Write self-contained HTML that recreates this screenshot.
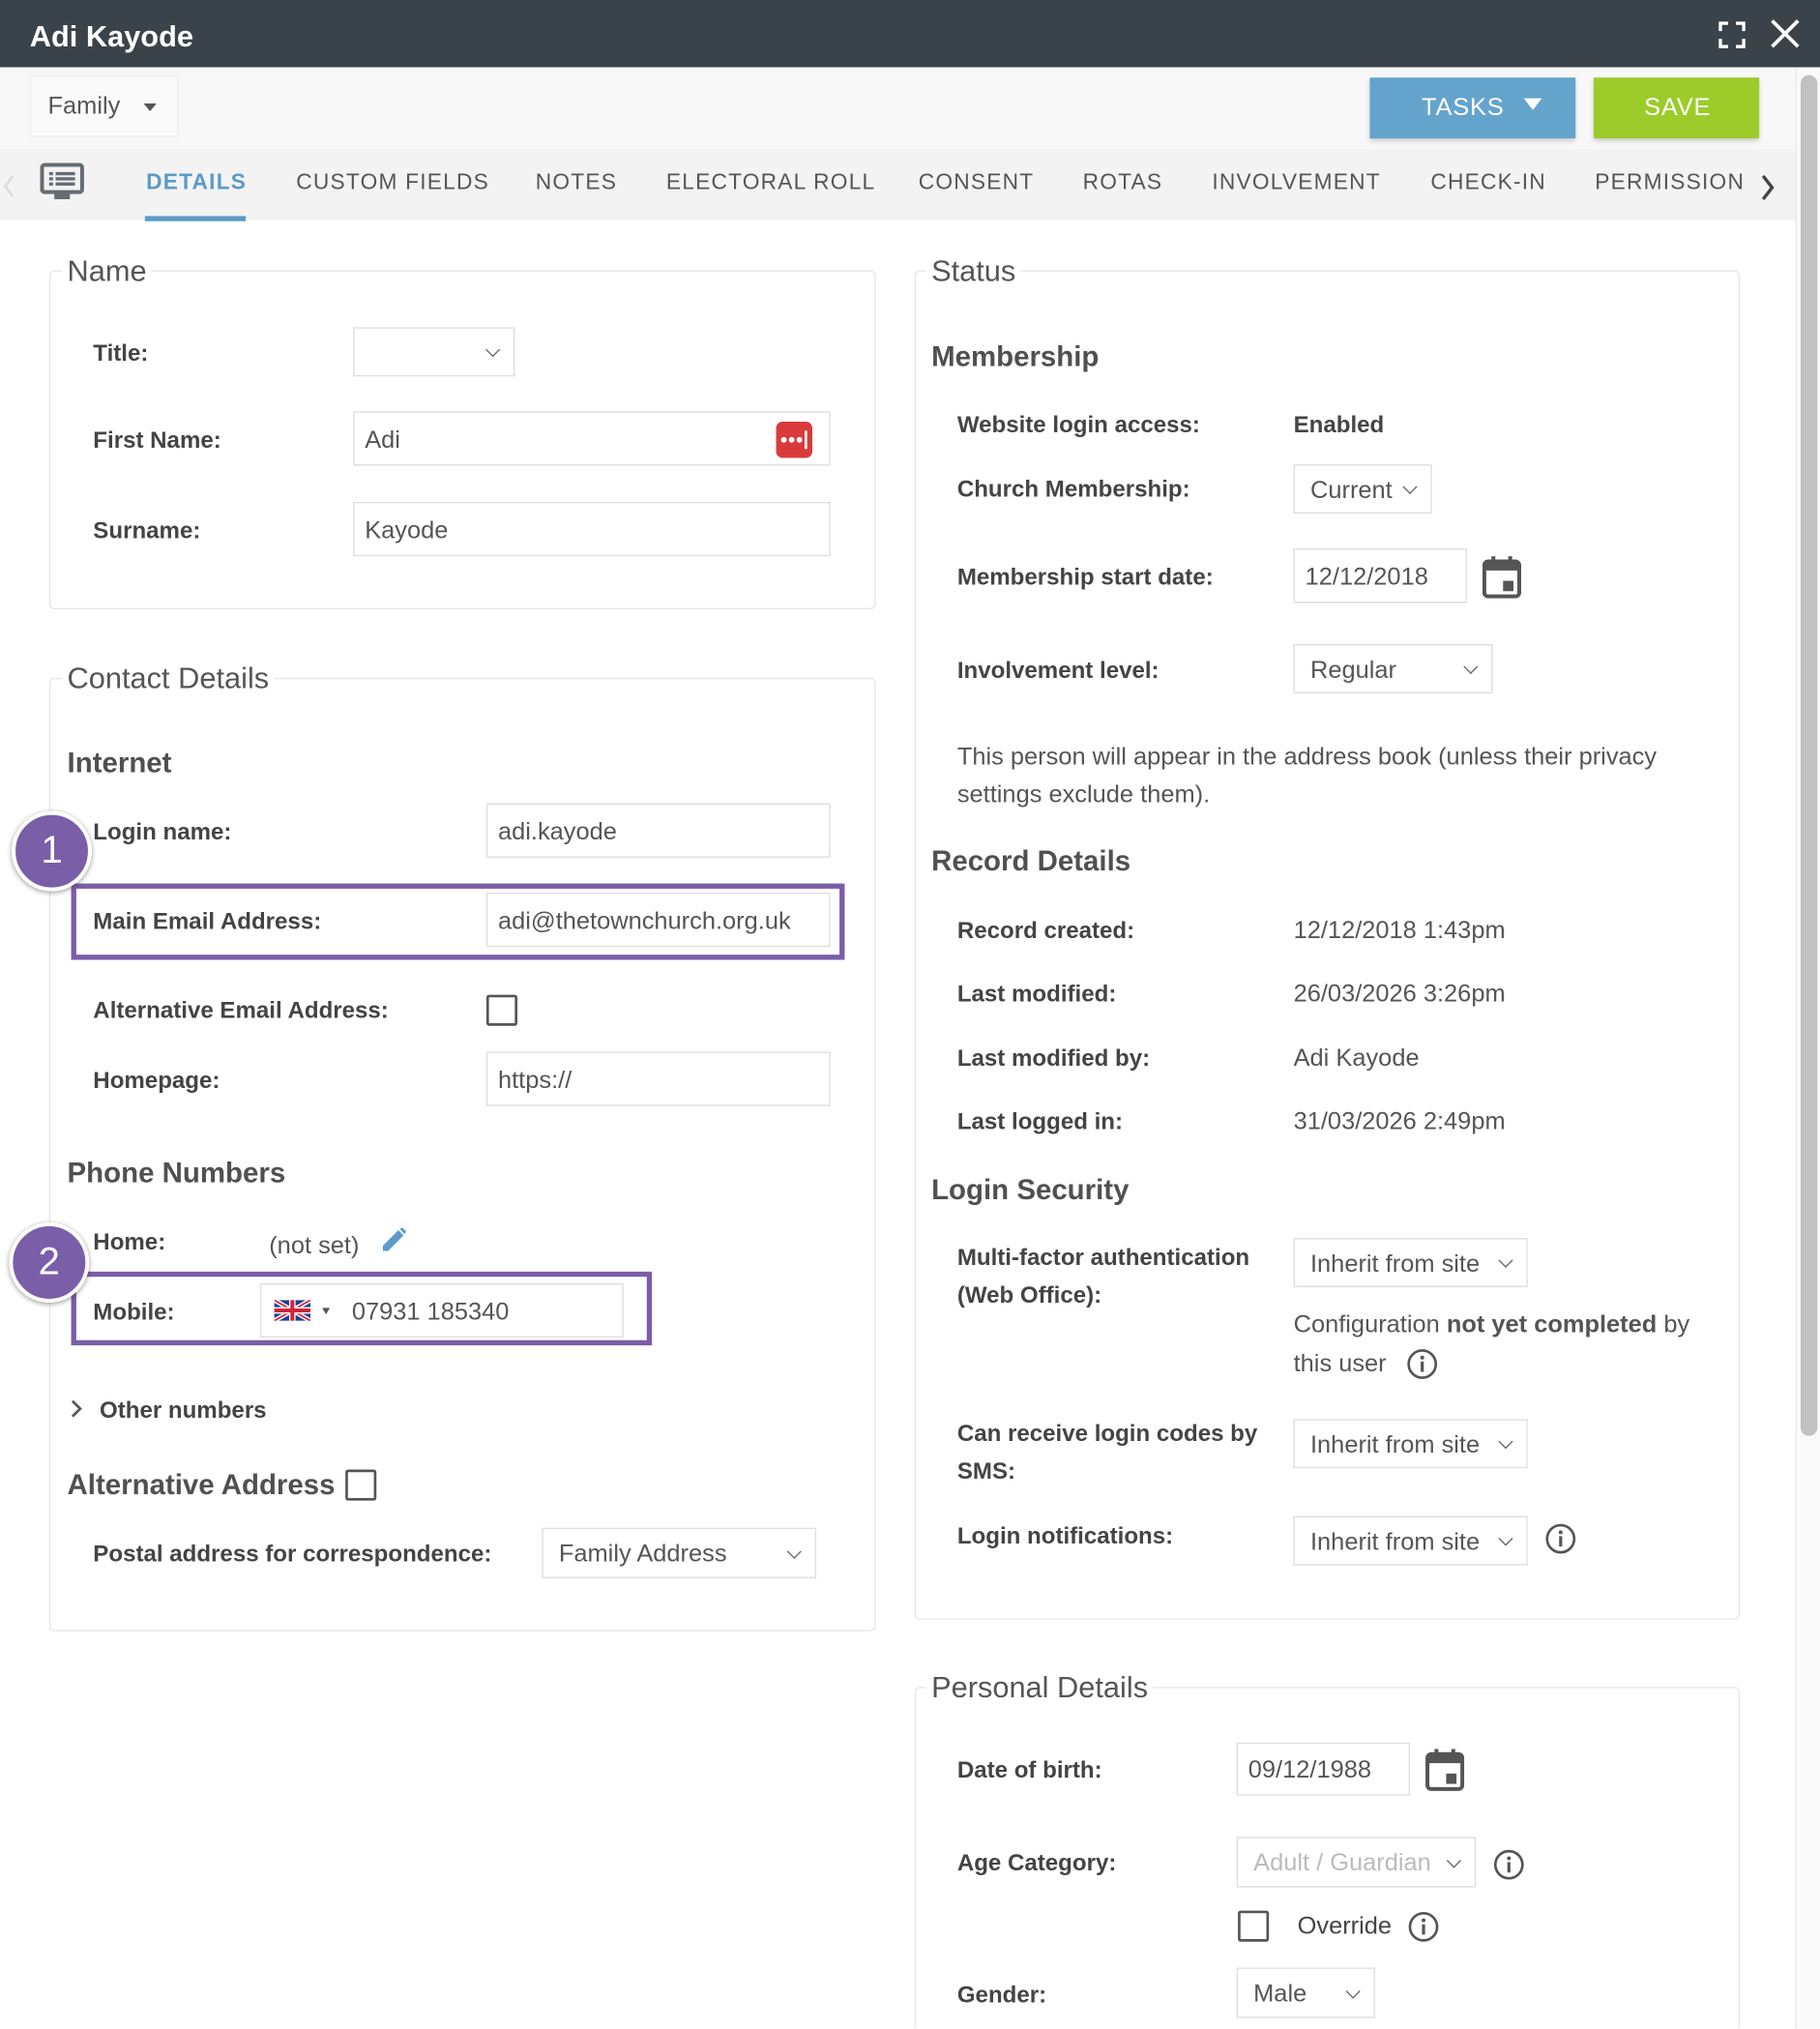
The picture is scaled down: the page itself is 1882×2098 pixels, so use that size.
<!DOCTYPE html>
<html><head><meta charset="utf-8">
<style>
*{box-sizing:border-box;margin:0;padding:0}
html,body{width:1882px;height:2098px;overflow:hidden;background:#fff}
#w{position:absolute;left:0;top:0;width:1407px;height:1568px;transform:scale(1.3376);transform-origin:0 0;font-family:"Liberation Sans",Arial,sans-serif;color:#555;background:#fff;overflow:hidden}
.a{position:absolute}
.t{position:absolute;line-height:24px;font-size:19px;white-space:nowrap}
.l{position:absolute;line-height:24px;font-size:18px;font-weight:bold;color:#444;white-space:nowrap}
.h{position:absolute;line-height:28px;font-size:22px;font-weight:bold;color:#505050;white-space:nowrap}
.lg{position:absolute;line-height:28px;font-size:23px;color:#555;background:#fff;padding:0 4px;white-space:nowrap}
.fs{position:absolute;border:1px solid #e6e6e6;border-radius:4px}
.in{position:absolute;border:1px solid #ddd;background:#fff;font-size:19px;color:#555;padding-left:8px;padding-top:3px;display:flex;align-items:center}
.sel{position:absolute;border:1px solid #ddd;background:#fff;font-size:19px;color:#555;padding-left:12px;padding-top:3px;display:flex;align-items:center}
.sel:after{content:"";position:absolute;right:12px;top:50%;width:7px;height:7px;border-right:1.5px solid #666;border-bottom:1.5px solid #666;transform:translateY(-70%) rotate(45deg)}
.cb{position:absolute;width:24px;height:24px;border:2px solid #555;border-radius:2px;background:#fff}
.tab{position:absolute;top:130px;font-size:17px;letter-spacing:0.9px;color:#555;line-height:22px}
.circ{position:absolute;width:62px;height:62px;border-radius:50%;background:#7a5ea8;border:3px solid #fff;box-shadow:0 1px 4px rgba(0,0,0,.4);color:#fff;font-size:30px;text-align:center;line-height:56px}
.pb{position:absolute;border:4px solid #7a5ea8}
</style></head><body><div id="w">
<div class="a" style="left:0;top:0;width:1407px;height:52px;background:#3a434a"></div>
<div class="a" style="left:23px;top:14px;font-size:23px;font-weight:bold;color:#fff;line-height:28px">Adi Kayode</div>
<svg class="a" style="left:1328px;top:16px" width="22" height="22" viewBox="0 0 22 22" fill="none" stroke="#fff" stroke-width="2.5"><path d="M2 8V2h6M14 2h6v6M20 14v6h-6M8 20H2v-6"/></svg>
<svg class="a" style="left:1368px;top:14px" width="24" height="24" viewBox="0 0 24 24" stroke="#fff" stroke-width="2.8"><path d="M2 2L22 22M22 2L2 22"/></svg>
<div class="a" style="left:0;top:52px;width:1388px;height:63px;background:#f8f8f8"></div>
<div class="a" style="left:23px;top:58px;width:115px;height:48px;border:1px solid #eee;background:#fafafa"></div>
<div class="t" style="left:37px;top:71px">Family</div>
<div class="a" style="left:111px;top:80px;border-left:5px solid transparent;border-right:5px solid transparent;border-top:6px solid #555"></div>
<div class="a" style="left:1059px;top:60px;width:159px;height:47px;background:#64a4cc;box-shadow:0 2px 4px rgba(0,0,0,.2)"></div>
<div class="a" style="left:1099px;top:72px;color:#fff;font-size:19px;letter-spacing:0.6px;line-height:24px">TASKS</div>
<div class="a" style="left:1178px;top:76px;border-left:7px solid transparent;border-right:7px solid transparent;border-top:9px solid #fff"></div>
<div class="a" style="left:1232px;top:60px;width:128px;height:47px;background:#9dcb2a;box-shadow:0 2px 4px rgba(0,0,0,.2)"></div>
<div class="a" style="left:1271px;top:72px;color:#fff;font-size:19px;letter-spacing:0.6px;line-height:24px">SAVE</div>
<div class="a" style="left:0;top:115px;width:1388px;height:55px;background:#f3f3f3"></div>
<svg class="a" style="left:2px;top:134px" width="10" height="20" viewBox="0 0 10 20" fill="none" stroke="#ddd" stroke-width="2"><path d="M8 2L2 10l6 8"/></svg>
<svg class="a" style="left:31px;top:126px" width="34" height="30" viewBox="0 0 34 30"><rect x="1.5" y="1.5" width="31" height="21" rx="2" fill="none" stroke="#646c74" stroke-width="3"/><rect x="11" y="23" width="12" height="5" fill="#646c74"/><g fill="#646c74"><rect x="7" y="7" width="3" height="2.5"/><rect x="12" y="7" width="15" height="2.5"/><rect x="7" y="11" width="3" height="2.5"/><rect x="12" y="11" width="15" height="2.5"/><rect x="7" y="15" width="3" height="2.5"/><rect x="12" y="15" width="15" height="2.5"/></g></svg>
<div class="tab" style="left:113px;color:#5b9bc7;font-weight:bold">DETAILS</div>
<div class="a" style="left:112px;top:167px;width:78px;height:4px;background:#5b9bc7"></div>
<div class="tab" style="left:229px">CUSTOM FIELDS</div>
<div class="tab" style="left:414px">NOTES</div>
<div class="tab" style="left:515px">ELECTORAL ROLL</div>
<div class="tab" style="left:710px">CONSENT</div>
<div class="tab" style="left:837px">ROTAS</div>
<div class="tab" style="left:937px">INVOLVEMENT</div>
<div class="tab" style="left:1106px">CHECK-IN</div>
<div class="tab" style="left:1233px">PERMISSION</div>
<svg class="a" style="left:1361px;top:134px" width="12" height="22" viewBox="0 0 12 22" fill="none" stroke="#444" stroke-width="2.5"><path d="M2 2l7 9-7 9"/></svg>
<div class="a" style="left:1388px;top:52px;width:19px;height:1516px;background:#fafafa;border-left:1px solid #e8e8e8"></div>
<div class="a" style="left:1392px;top:58px;width:13px;height:1052px;background:#c1c1c1;border-radius:7px"></div>

<div class="fs" style="left:38px;top:209px;width:639px;height:262px"></div>
<div class="lg" style="left:48px;top:195px">Name</div>
<div class="l" style="left:72px;top:261px">Title:</div>
<div class="sel" style="left:273px;top:253px;width:125px;height:38px"></div>
<div class="l" style="left:72px;top:328px">First Name:</div>
<div class="in" style="left:273px;top:318px;width:369px;height:42px">Adi</div>
<svg class="a" style="left:600px;top:326px" width="28" height="28" viewBox="0 0 28 28"><rect width="28" height="28" rx="5" fill="#d93b3b"/><circle cx="6" cy="14" r="2.2" fill="#fff"/><circle cx="12" cy="14" r="2.2" fill="#fff"/><circle cx="18" cy="14" r="2.2" fill="#fff"/><rect x="22" y="7" width="2" height="14" fill="#fff"/></svg>
<div class="l" style="left:72px;top:398px">Surname:</div>
<div class="in" style="left:273px;top:388px;width:369px;height:42px">Kayode</div>

<div class="fs" style="left:38px;top:524px;width:639px;height:737px"></div>
<div class="lg" style="left:48px;top:510px">Contact Details</div>
<div class="h" style="left:52px;top:576px">Internet</div>
<div class="l" style="left:72px;top:631px">Login name:</div>
<div class="in" style="left:376px;top:621px;width:266px;height:42px">adi.kayode</div>
<div class="pb" style="left:55px;top:683px;width:598px;height:59px"></div>
<div class="l" style="left:72px;top:700px">Main Email Address:</div>
<div class="in" style="left:376px;top:690px;width:266px;height:42px">adi@thetownchurch.org.uk</div>
<div class="l" style="left:72px;top:769px">Alternative Email Address:</div>
<div class="cb" style="left:376px;top:769px"></div>
<div class="l" style="left:72px;top:823px">Homepage:</div>
<div class="in" style="left:376px;top:813px;width:266px;height:42px">https://</div>
<div class="h" style="left:52px;top:893px">Phone Numbers</div>
<div class="l" style="left:72px;top:948px">Home:</div>
<div class="t" style="left:208px;top:952px">(not set)</div>
<svg class="a" style="left:293px;top:948px" width="22" height="22" viewBox="0 0 22 22"><path d="M3 15L15 3l4 4L7 19H3z" fill="#5b9bc7"/><path d="M16 2l2-1 3 3-1 2z" fill="#5b9bc7"/></svg>
<div class="pb" style="left:55px;top:983px;width:449px;height:57px"></div>
<div class="l" style="left:72px;top:1002px">Mobile:</div>
<div class="in" style="left:201px;top:992px;width:281px;height:42px;padding-left:70px">07931 185340</div>
<svg class="a" style="left:212px;top:1005px" width="28" height="16" viewBox="0 0 28 16"><rect width="28" height="16" fill="#1d3f8f"/><path d="M0 0L28 16M28 0L0 16" stroke="#fff" stroke-width="3.5"/><path d="M0 0L28 16M28 0L0 16" stroke="#d0243a" stroke-width="1.3"/><path d="M14 0v16M0 8h28" stroke="#fff" stroke-width="5"/><path d="M14 0v16M0 8h28" stroke="#d0243a" stroke-width="3"/></svg>
<div class="a" style="left:249px;top:1011px;border-left:3.5px solid transparent;border-right:3.5px solid transparent;border-top:5px solid #555"></div>
<div class="circ" style="left:9px;top:627px">1</div>
<div class="circ" style="left:7px;top:945px">2</div>
<svg class="a" style="left:54px;top:1081px" width="10" height="16" viewBox="0 0 10 16" fill="none" stroke="#555" stroke-width="2"><path d="M2 2l6 6-6 6"/></svg>
<div class="l" style="left:77px;top:1078px">Other numbers</div>
<div class="h" style="left:52px;top:1134px">Alternative Address</div>
<div class="cb" style="left:267px;top:1136px"></div>
<div class="l" style="left:72px;top:1189px">Postal address for correspondence:</div>
<div class="sel" style="left:419px;top:1181px;width:212px;height:39px">Family Address</div>

<div class="fs" style="left:707px;top:209px;width:638px;height:1043px"></div>
<div class="lg" style="left:716px;top:195px">Status</div>
<div class="h" style="left:720px;top:262px">Membership</div>
<div class="l" style="left:740px;top:316px">Website login access:</div>
<div class="l" style="left:1000px;top:316px">Enabled</div>
<div class="l" style="left:740px;top:366px">Church Membership:</div>
<div class="sel" style="left:1000px;top:359px;width:107px;height:38px">Current</div>
<div class="l" style="left:740px;top:434px">Membership start date:</div>
<div class="in" style="left:1000px;top:424px;width:134px;height:42px">12/12/2018</div>
<svg class="a" style="left:1146px;top:429px" width="30" height="34" viewBox="0 0 30 34"><rect x="1.5" y="5" width="27" height="27" rx="3" fill="none" stroke="#555" stroke-width="3"/><rect x="1.5" y="5" width="27" height="7" fill="#555"/><rect x="7" y="1" width="3" height="6" fill="#555"/><rect x="20" y="1" width="3" height="6" fill="#555"/><rect x="16" y="20" width="8" height="8" fill="#555"/></svg>
<div class="l" style="left:740px;top:506px">Involvement level:</div>
<div class="sel" style="left:1000px;top:498px;width:154px;height:38px">Regular</div>
<div class="t" style="left:740px;top:574px">This person will appear in the address book (unless their privacy</div>
<div class="t" style="left:740px;top:603px">settings exclude them).</div>
<div class="h" style="left:720px;top:652px">Record Details</div>
<div class="l" style="left:740px;top:707px">Record created:</div><div class="t" style="left:1000px;top:708px">12/12/2018 1:43pm</div>
<div class="l" style="left:740px;top:756px">Last modified:</div><div class="t" style="left:1000px;top:757px">26/03/2026 3:26pm</div>
<div class="l" style="left:740px;top:806px">Last modified by:</div><div class="t" style="left:1000px;top:807px">Adi Kayode</div>
<div class="l" style="left:740px;top:855px">Last logged in:</div><div class="t" style="left:1000px;top:856px">31/03/2026 2:49pm</div>
<div class="h" style="left:720px;top:906px">Login Security</div>
<div class="l" style="left:740px;top:960px">Multi-factor authentication</div>
<div class="l" style="left:740px;top:989px">(Web Office):</div>
<div class="sel" style="left:1000px;top:957px;width:181px;height:38px">Inherit from site</div>
<div class="t" style="left:1000px;top:1013px">Configuration <b>not yet completed</b> by</div>
<div class="t" style="left:1000px;top:1043px">this user</div>
<svg class="a" style="left:1087px;top:1042px" width="25" height="25" viewBox="0 0 25 25"><circle cx="12.5" cy="12.5" r="10.5" fill="none" stroke="#555" stroke-width="2"/><rect x="11.3" y="10.5" width="2.4" height="8" fill="#555"/><circle cx="12.5" cy="7.5" r="1.5" fill="#555"/></svg>
<div class="l" style="left:740px;top:1096px">Can receive login codes by</div>
<div class="l" style="left:740px;top:1125px">SMS:</div>
<div class="sel" style="left:1000px;top:1097px;width:181px;height:38px">Inherit from site</div>
<div class="l" style="left:740px;top:1175px">Login notifications:</div>
<div class="sel" style="left:1000px;top:1172px;width:181px;height:38px">Inherit from site</div>
<svg class="a" style="left:1194px;top:1177px" width="25" height="25" viewBox="0 0 25 25"><circle cx="12.5" cy="12.5" r="10.5" fill="none" stroke="#555" stroke-width="2"/><rect x="11.3" y="10.5" width="2.4" height="8" fill="#555"/><circle cx="12.5" cy="7.5" r="1.5" fill="#555"/></svg>

<div class="fs" style="left:707px;top:1304px;width:638px;height:264px;border-bottom:none;border-radius:4px 4px 0 0"></div>
<div class="lg" style="left:716px;top:1290px">Personal Details</div>
<div class="l" style="left:740px;top:1356px">Date of birth:</div>
<div class="in" style="left:956px;top:1347px;width:134px;height:41px">09/12/1988</div>
<svg class="a" style="left:1102px;top:1351px" width="30" height="34" viewBox="0 0 30 34"><rect x="1.5" y="5" width="27" height="27" rx="3" fill="none" stroke="#555" stroke-width="3"/><rect x="1.5" y="5" width="27" height="7" fill="#555"/><rect x="7" y="1" width="3" height="6" fill="#555"/><rect x="20" y="1" width="3" height="6" fill="#555"/><rect x="16" y="20" width="8" height="8" fill="#555"/></svg>
<div class="l" style="left:740px;top:1428px">Age Category:</div>
<div class="sel" style="left:956px;top:1420px;width:185px;height:39px;color:#bbb">Adult / Guardian</div>
<svg class="a" style="left:1154px;top:1429px" width="25" height="25" viewBox="0 0 25 25"><circle cx="12.5" cy="12.5" r="10.5" fill="none" stroke="#555" stroke-width="2"/><rect x="11.3" y="10.5" width="2.4" height="8" fill="#555"/><circle cx="12.5" cy="7.5" r="1.5" fill="#555"/></svg>
<div class="cb" style="left:957px;top:1477px"></div>
<div class="t" style="left:1003px;top:1478px;color:#444">Override</div>
<svg class="a" style="left:1088px;top:1477px" width="25" height="25" viewBox="0 0 25 25"><circle cx="12.5" cy="12.5" r="10.5" fill="none" stroke="#555" stroke-width="2"/><rect x="11.3" y="10.5" width="2.4" height="8" fill="#555"/><circle cx="12.5" cy="7.5" r="1.5" fill="#555"/></svg>
<div class="l" style="left:740px;top:1530px">Gender:</div>
<div class="sel" style="left:956px;top:1521px;width:107px;height:39px">Male</div>
</div></body></html>
